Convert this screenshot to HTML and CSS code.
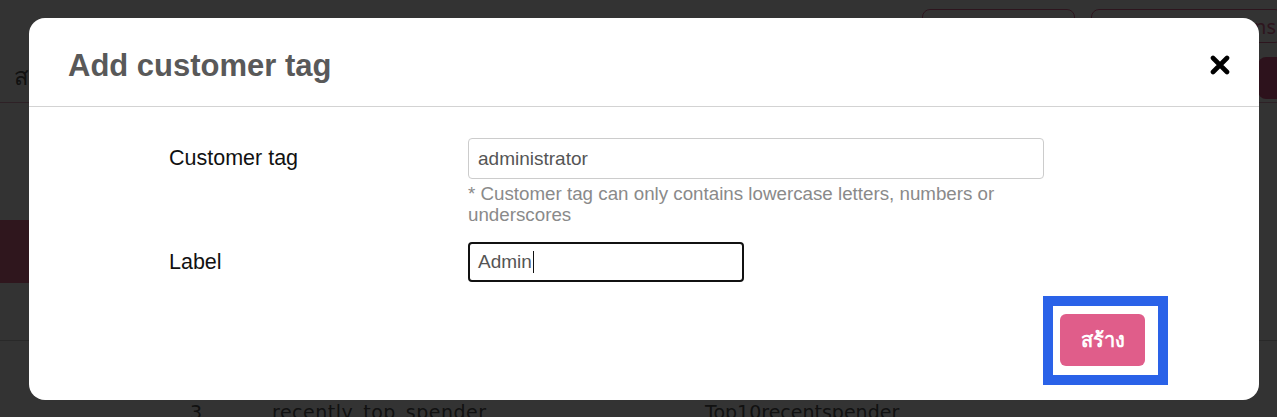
FILE: index.html
```html
<!DOCTYPE html>
<html lang="en">
<head>
    <meta charset="UTF-8">
    <title>Customer tags</title>
    <link rel="stylesheet" href="styles.css">
</head>
<body>
    <div class="page">
        <div class="topbar">
            <button class="outline-btn first">Export</button>
            <button class="outline-btn second">Columns</button>
        </div>
        <div class="toolbar">
            <span class="toolbar-title">สร้าง</span>
            <button class="fill-btn"></button>
        </div>
        <div class="filters"></div>
        <div class="thead"></div>
        <div class="trow"></div>
        <div class="trow last">
            <span class="cell-no">3</span>
            <span class="cell-tag">recently_top_spender</span>
            <span class="cell-label">Top10recentspender</span>
        </div>
    </div>

    <div class="overlay">
        <div class="modal">
            <div class="modal-header">
                <h2 class="modal-title">Add customer tag</h2>
                <button class="close-btn" aria-label="Close">
                    <svg width="20" height="20" viewBox="0 0 20 20">
                        <path d="M3 3 L17 17 M17 3 L3 17" stroke="#000" stroke-width="4.6" stroke-linecap="round" fill="none"/>
                    </svg>
                </button>
            </div>
            <div class="modal-body">
                <div class="form-row">
                    <label class="form-label" for="tag">Customer tag</label>
                    <div class="form-field">
                        <input class="text-input wide" id="tag" type="text" value="administrator">
                        <div class="help-text">* Customer tag can only contains lowercase letters, numbers or underscores</div>
                    </div>
                </div>
                <div class="form-row second-row">
                    <label class="form-label" for="label">Label</label>
                    <div class="form-field">
                        <div class="text-input narrow focused">Admin<span class="caret"></span></div>
                    </div>
                </div>
                <div class="modal-footer">
                    <span class="highlight">
                        <button class="create-btn">สร้าง</button>
                    </span>
                </div>
            </div>
        </div>
    </div>
</body>
</html>
```

FILE: styles.css
```css
body {
    margin: 0;
    padding: 0;
    font-family: 'Liberation Sans', Arial, sans-serif;
    background: #fff;
    overflow: hidden;
    width: 1277px;
    height: 417px;
}

.page {
    width: 1277px;
}

.topbar {
    height: 50px;
    box-sizing: border-box;
    padding-top: 9px;
    display: flex;
    gap: 16px;
    padding-left: 922px;
}

.outline-btn {
    height: 34px;
    border: 1px solid #e26b94;
    border-radius: 8px;
    background: #fff;
    color: #e26b94;
    font-family: 'Noto Sans', sans-serif;
    font-size: 20px;
    flex-shrink: 0;
}

.outline-btn.first {
    width: 153px;
}

.outline-btn.second {
    width: 192px;
    text-align: right;
    padding-right: 6px;
}

.toolbar {
    height: 53px;
    box-sizing: border-box;
    border-bottom: 1px solid #e6a7bd;
    display: flex;
    justify-content: space-between;
    align-items: center;
    padding-left: 14px;
}

.toolbar-title {
    font-size: 24px;
    color: #555;
}

.fill-btn {
    width: 60px;
    height: 42px;
    margin-right: -41px;
    margin-top: 4px;
    border: none;
    border-radius: 8px;
    background: #e05d8a;
}

.filters {
    height: 117px;
}

.thead {
    height: 63px;
    width: 1240px;
    background: #e8708f;
}

.trow {
    height: 57px;
    border-bottom: 1px solid #ccc;
    display: flex;
    align-items: flex-start;
    font-family: 'DejaVu Sans', sans-serif;
    font-size: 19px;
    color: #555;
}

.trow.last {
    padding-top: 60px;
}

.cell-no {
    margin-left: 190px;
    width: 82px;
}

.cell-tag {
    width: 433px;
    letter-spacing: 0.5px;
}

.overlay {
    position: fixed;
    top: 0;
    left: 0;
    right: 0;
    bottom: 0;
    background: rgba(0, 0, 0, 0.8);
    padding: 18px 0 0 29px;
}

.modal {
    width: 1230px;
    height: 382px;
    background: #fff;
    border-radius: 16px;
}

.modal-header {
    height: 89px;
    box-sizing: border-box;
    border-bottom: 1px solid #d3d3d3;
    display: flex;
    justify-content: space-between;
    align-items: center;
    padding: 8px 29px 0 39px;
}

.modal-title {
    margin: 0;
    font-size: 31px;
    font-weight: bold;
    color: #595959;
}

.close-btn {
    border: none;
    background: none;
    padding: 0;
    width: 20px;
    height: 20px;
    margin-top: -3px;
}

.close-btn svg {
    display: block;
}

.modal-body {
    padding-top: 31px;
}

.form-row {
    display: grid;
    grid-template-columns: 299px 576px;
    margin-left: 140px;
}

.second-row {
    margin-top: 17px;
}

.form-label {
    font-size: 21.5px;
    color: #111;
    height: 41px;
    display: flex;
    align-items: center;
}

.text-input {
    box-sizing: border-box;
    height: 41px;
    border: 1px solid #ccc;
    border-radius: 4px;
    padding: 0 9px;
    font-family: 'Liberation Sans', Arial, sans-serif;
    font-size: 19px;
    color: #555;
    display: flex;
    align-items: center;
}

.text-input.wide {
    width: 576px;
}

.text-input.narrow {
    width: 276px;
    height: 40px;
}

.text-input.focused {
    border: 2px solid #111;
    padding: 0 8px;
}

.caret {
    display: inline-block;
    width: 1px;
    height: 22px;
    background: #111;
    margin-left: 1px;
}

.help-text {
    margin-top: 4px;
    font-size: 18.75px;
    line-height: 21px;
    color: #8a8a8a;
}

.modal-footer {
    display: flex;
    justify-content: flex-end;
    padding-right: 91px;
    margin-top: 13px;
}

.highlight {
    display: block;
    border: 10px solid #2a62e8;
    padding: 8px 13px 9px 7px;
}

.create-btn {
    display: block;
    width: 85px;
    height: 52px;
    border: none;
    border-radius: 6px;
    background: #e05d8a;
    color: #fff;
    font-family: 'Noto Sans', 'DejaVu Sans', sans-serif;
    font-size: 20px;
    font-weight: bold;
}
```
